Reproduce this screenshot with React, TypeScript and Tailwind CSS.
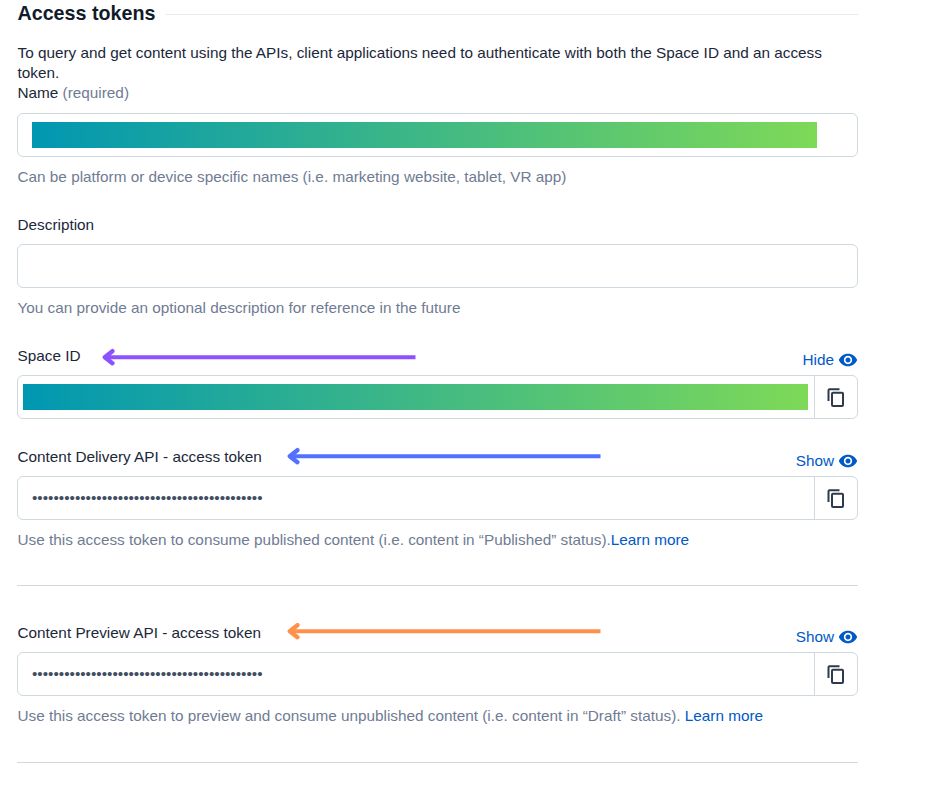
import type { ReactNode } from "react";
import { MdVisibility } from "react-icons/md";

function Arrow({ className }: { className: string }) {
  return (
    <svg className={`absolute ${className}`} width="316" height="20" viewBox="0 0 316 20" fill="none" stroke="currentColor" strokeWidth="4">
      <path d="M4 10.2H313.5" />
      <path d="M10.4 4.2L2.8 10.2L10.4 16.2" strokeWidth="4.4" strokeLinecap="round" strokeLinejoin="round" />
    </svg>
  );
}

function CopyIcon() {
  return (
    <svg className="mt-px -ml-px" width="18" height="20" viewBox="0 0 18 20" fill="none" stroke="currentColor" strokeWidth="2">
      <path d="M1.5 13V2.3Q1.5 1.3 2.5 1.3H12.5" />
      <rect x="5" y="4.7" width="11" height="13.2" rx="1" />
    </svg>
  );
}

function Redacted() {
  return <div className="h-[26px] w-[785px] bg-linear-to-r/srgb from-[#0097b2] to-[#7ed957]" />;
}

function Help({ children }: { children: ReactNode }) {
  return <p className="mt-[10px] h-5 pl-[0.5px] whitespace-nowrap text-[#6f7b93]">{children}</p>;
}

function Link({ children }: { children: ReactNode }) {
  return <a className="text-[#0059c8]">{children}</a>;
}

function SecretField({ label, action, arrow, children, compact }: {
  label: string; action: string; arrow: string; children: ReactNode; compact?: boolean;
}) {
  return (
    <div className="relative">
      <div className="flex h-[29px] justify-between">
        <label className="h-5 pl-[0.5px]">{label}</label>
        <button className="mt-1 flex h-5 items-center gap-1 text-[#0059c8]">
          {action}
          <MdVisibility className="size-5" />
        </button>
      </div>
      <Arrow className={arrow} />
      <div className="flex h-11 rounded-md border border-[#cfd9e0]">
        <div className={`flex flex-1 items-center border-r border-[#cfd9e0] ${compact ? "pl-[5px]" : "pl-[14px]"}`}>{children}</div>
        <button className="flex w-[42px] items-center justify-center text-[#2f3a4d]">
          <CopyIcon />
        </button>
      </div>
    </div>
  );
}

const dots = "•".repeat(43);

export default function App() {
  return (
    <main className="h-[788px] w-full overflow-hidden bg-white pl-[17px] font-['Liberation_Sans',Arial,sans-serif] text-[15.32px] leading-5 text-[#1b273a]">
      <div className="w-[841px]">
        <div className="flex h-[26px] items-center">
          <h2 className="pl-[0.5px] text-[19.7px] leading-[26px] font-bold whitespace-nowrap text-[#111b2b]">Access tokens</h2>
          <div className="mt-[3px] ml-[11px] h-px flex-1 bg-[#e5ebed]" />
        </div>
        <p className="mt-[17px] h-10 pl-[0.5px]">
          To query and get content using the APIs, client applications need to authenticate with both the Space ID and an access token.
        </p>
        <label className="block h-[30px] pl-[0.5px]">
          Name <span className="text-[#6f7b93]">(required)</span>
        </label>
        <div className="flex h-11 items-center rounded-md border border-[#cfd9e0] pl-[14px]">
          <Redacted />
        </div>
        <Help>Can be platform or device specific names (i.e. marketing website, tablet, VR app)</Help>

        <label className="mt-7 block h-[29px] pl-[0.5px]">Description</label>
        <div className="h-11 rounded-md border border-[#cfd9e0]" />
        <Help>You can provide an optional description for reference in the future</Help>

        <div className="mt-7">
          <SecretField label="Space ID" action="Hide" arrow="left-[85px] top-[1px] text-[#8c52ff]" compact>
            <Redacted />
          </SecretField>
        </div>

        <div className="mt-7">
          <SecretField label="Content Delivery API - access token" action="Show" arrow="left-[270px] -top-[1px] text-[#5271ff]">
            <span className="text-[#414d63]">{dots}</span>
          </SecretField>
          <Help>
            Use this access token to consume published content (i.e. content in “Published” status).<Link>Learn more</Link>
          </Help>
        </div>

        <hr className="mt-[35px] border-[#cfd9e0]" />

        <div className="mt-[37px]">
          <SecretField label="Content Preview API - access token" action="Show" arrow="left-[270px] -top-[2px] text-[#ff914d]">
            <span className="text-[#414d63]">{dots}</span>
          </SecretField>
          <Help>
            Use this access token to preview and consume unpublished content (i.e. content in “Draft” status). <Link>Learn more</Link>
          </Help>
        </div>

        <hr className="mt-[36px] border-[#cfd9e0]" />
      </div>
    </main>
  );
}
